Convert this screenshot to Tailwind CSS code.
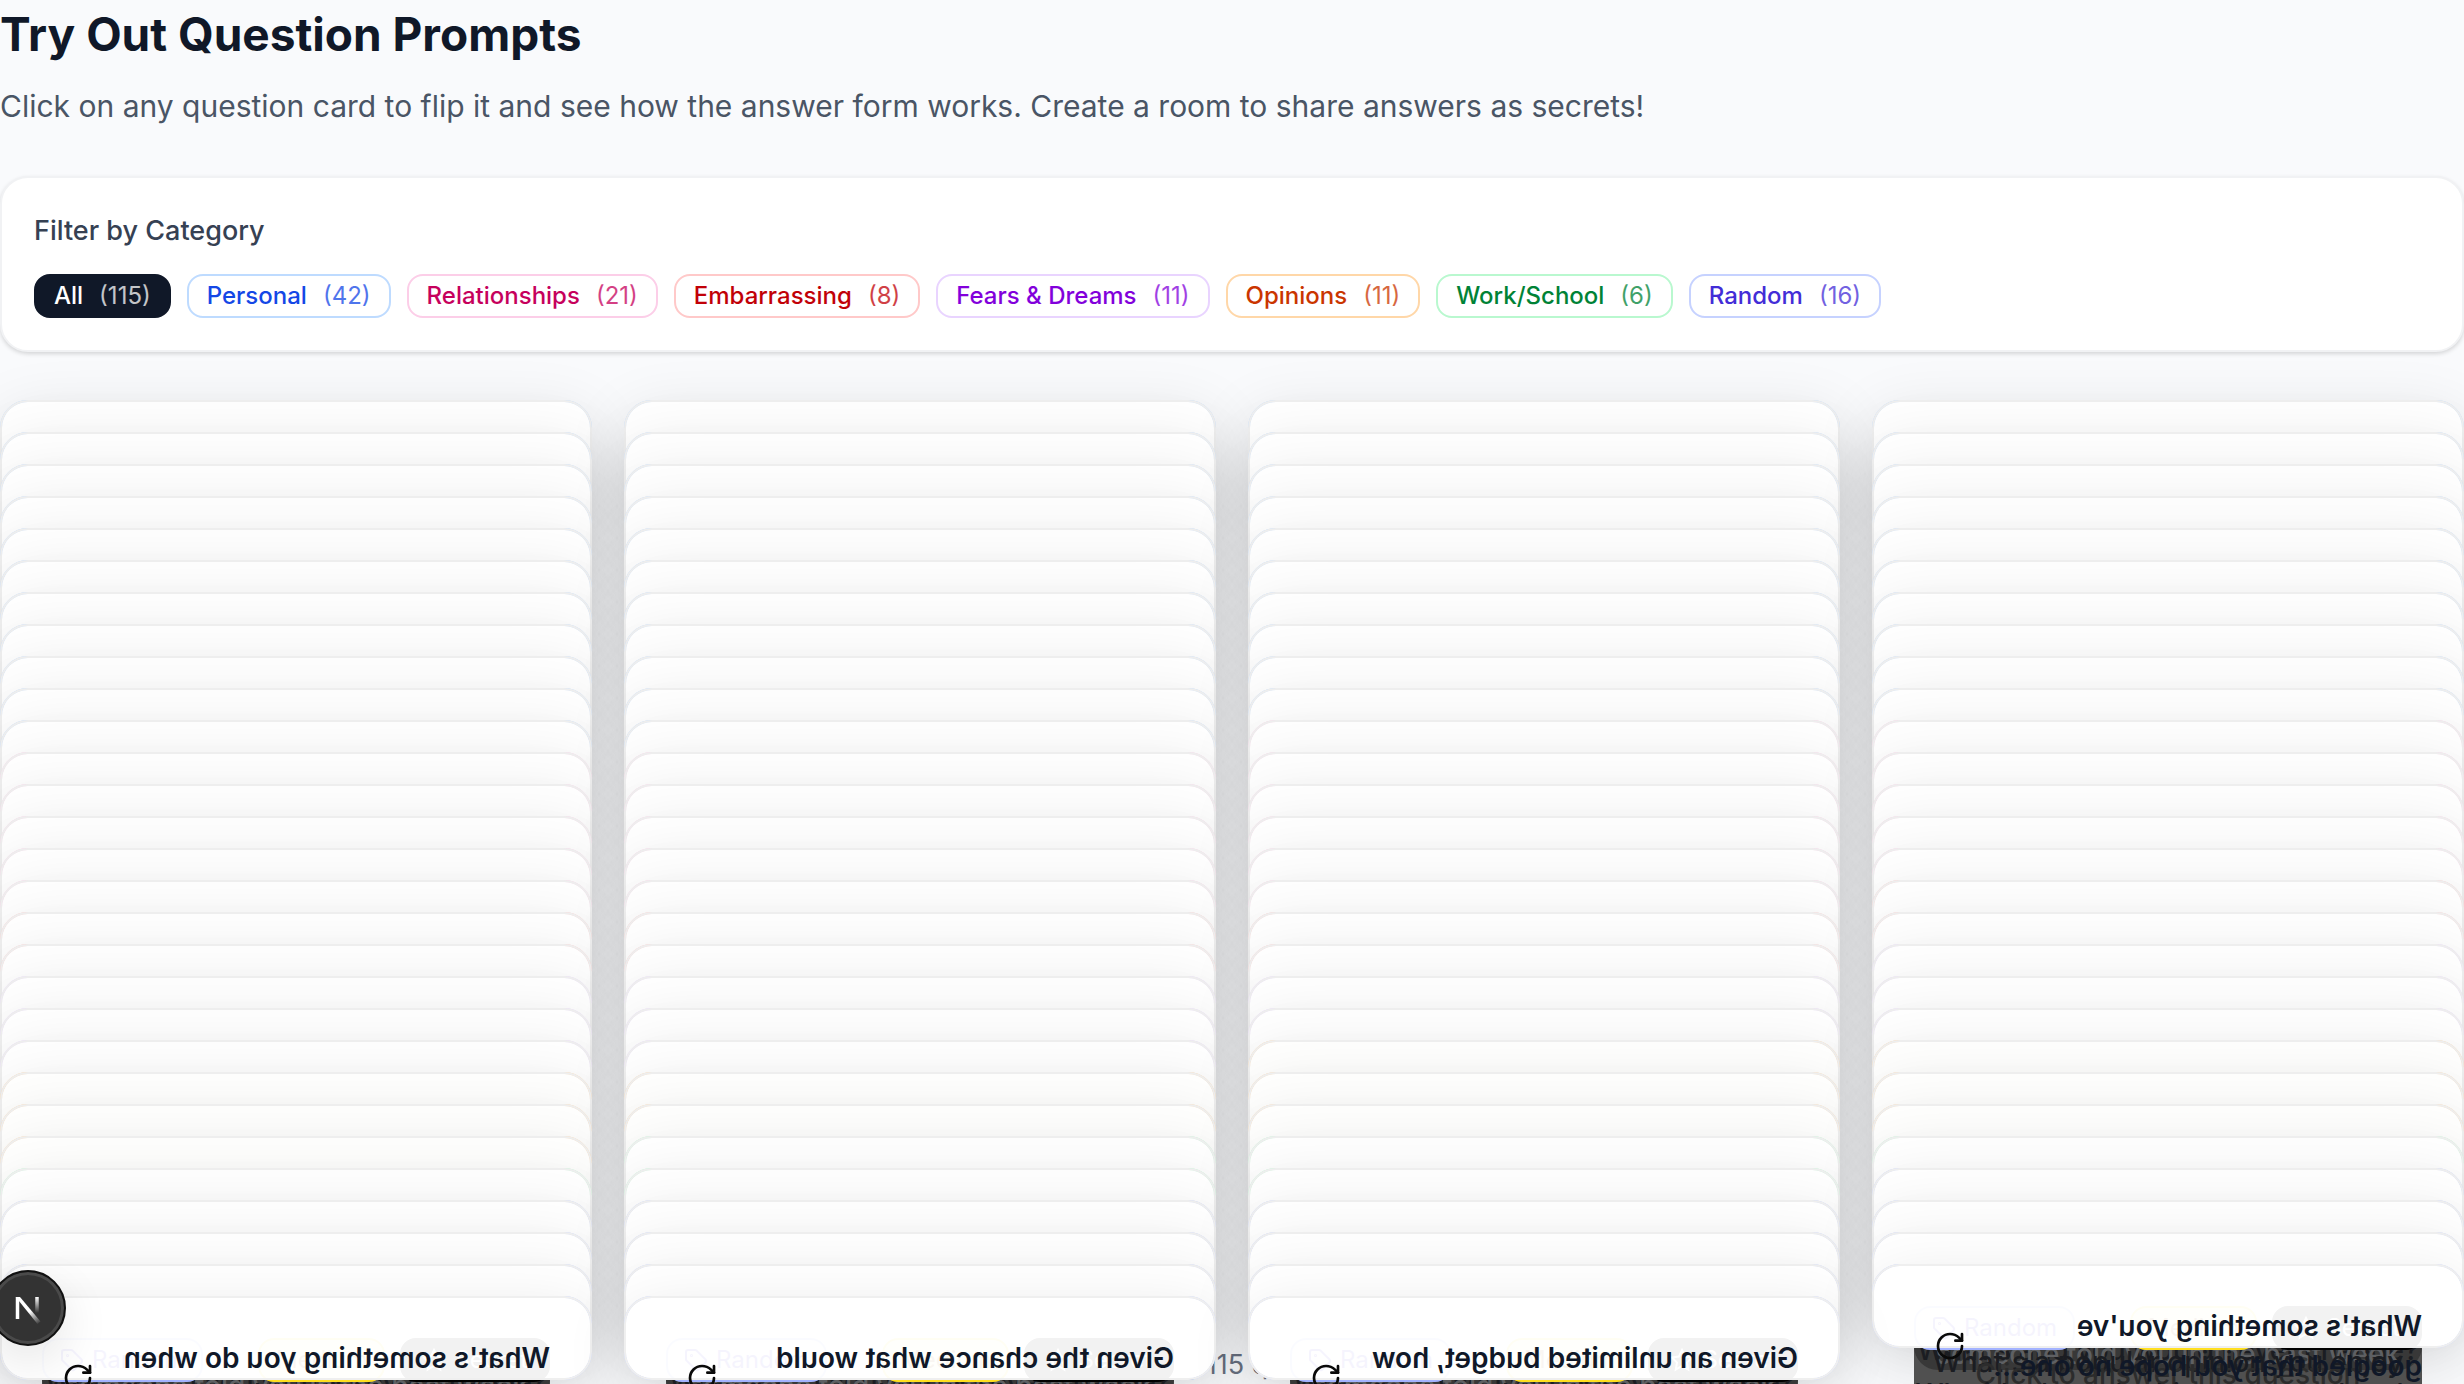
<!DOCTYPE html>
<html lang="en">
<head>
<meta charset="utf-8">
<title>Question Prompts</title>
<script src="https://cdn.jsdelivr.net/npm/@tailwindcss/browser@4"></script>
</head>
<body class="bg-[#f9fafc] font-[Inter,sans-serif] text-gray-900">
<div class="relative h-screen overflow-hidden">
  <main>
    <header class="mb-[46px] flex flex-col gap-4 pt-0.5">
      <h1 class="text-[46px] leading-16 font-bold text-[#101828]">Try Out Question Prompts</h1>
      <p class="text-[30px] leading-12 text-[#4a5565]">Click on any question card to flip it and see how the answer form works. Create a room to share answers as secrets!</p>
    </header>

    <section class="mb-12 flex flex-col gap-[22px] rounded-[28px] border-2 border-[#f1f2f4] bg-white p-8 shadow-[0_2px_4px_rgba(0,0,0,0.15)]">
      <h2 class="text-[27px] leading-[42px] font-medium text-[#364153]">Filter by Category</h2>
      <div id="filters" class="flex flex-wrap gap-4 text-[24px] leading-10 font-medium"></div>
    </section>

    <section id="cards" class="grid auto-rows-[0px] grid-cols-4 gap-8"></section>

    <p class="mt-12 text-center text-[27px] leading-[42px] text-[#6a7282]">Showing 115 questions</p>
  </main>

  <button aria-label="Open Next.js Dev Tools" class="absolute bottom-[38px] -left-[10px] size-19 rounded-full border-2 border-[#111] bg-[#333] shadow-[inset_0_0_0_3px_#4a4a4a,0_16px_48px_rgba(0,0,0,0.1)]">
    <svg class="size-full" viewBox="0 0 72 72" fill="none">
      <defs>
        <linearGradient id="diag" x1="40" y1="38" x2="49" y2="51" gradientUnits="userSpaceOnUse"><stop stop-color="#fff"/><stop offset="1" stop-color="#fff" stop-opacity="0"/></linearGradient>
        <linearGradient id="stem" x1="45" y1="25" x2="45" y2="41" gradientUnits="userSpaceOnUse"><stop stop-color="#fff"/><stop offset="1" stop-color="#fff" stop-opacity="0"/></linearGradient>
      </defs>
      <path d="M25.500 47V25" stroke="#fff" stroke-width="3.500"/>
      <path d="M23.700 25h4.300L48.500 49.500 45.500 52z" fill="url(#diag)"/>
      <path d="M45 25v16" stroke="url(#stem)" stroke-width="3.500"/>
    </svg>
  </button>
</div>

<script>
const categories = [
  { name: 'All', count: 115, pill: 'border-[#101828] bg-[#101828] text-white' },
  { name: 'Personal', count: 42, pill: 'border-blue-200 text-blue-700', face: 'border-blue-200 bg-blue-50' },
  { name: 'Relationships', count: 21, pill: 'border-pink-200 text-pink-700', face: 'border-pink-200 bg-pink-50' },
  { name: 'Embarrassing', count: 8, pill: 'border-red-200 text-red-700', face: 'border-red-200 bg-red-50' },
  { name: 'Fears & Dreams', count: 11, pill: 'border-purple-200 text-purple-700', face: 'border-purple-200 bg-purple-50' },
  { name: 'Opinions', count: 11, pill: 'border-orange-200 text-orange-700', face: 'border-orange-200 bg-orange-50' },
  { name: 'Work/School', count: 6, pill: 'border-green-200 text-green-700', face: 'border-green-200 bg-green-50' },
  { name: 'Random', count: 16, pill: 'border-indigo-200 text-indigo-700', face: 'border-indigo-200 bg-white' },
];

document.getElementById('filters').innerHTML = categories.map(c =>
  `<button class="flex gap-4 rounded-2xl border-2 px-[18px] ${c.pill}"><span>${c.name.replace('&', '&amp;')}</span><span class="font-normal opacity-75">(${c.count})</span></button>`).join('');

const prompts = {
  111: ["What's something you've", 'googled that you hope no one...'],
  112: ["What's something you do when", 'nobody is around to see you?'],
  113: ['Given the chance what would', 'you change about yourself?'],
  114: ['Given an unlimited budget, how', 'would you spend a weekend?'],
};

const tag = '<svg class="size-6" viewBox="0 0 24 24" fill="none" stroke="currentColor" stroke-width="2"><path d="M12.586 2.586A2 2 0 0 0 11.172 2H4a2 2 0 0 0-2 2v7.172a2 2 0 0 0 .586 1.414l8.704 8.704a2.426 2.426 0 0 0 3.420 0l6.580-6.580a2.426 2.426 0 0 0 0-3.420z"/><circle cx="7.500" cy="7.500" r=".5"/></svg>';
const star = '<svg class="size-6" viewBox="0 0 24 24" fill="none" stroke="currentColor" stroke-width="2"><path d="m12 2 3 6.500 7 1-5 5 1.200 7L12 18l-6.200 3.500 1.200-7-5-5 7-1z"/></svg>';
const flip = '<svg class="size-8 -scale-x-100" viewBox="0 0 24 24" fill="none" stroke="currentColor" stroke-width="2" stroke-linecap="round" stroke-linejoin="round"><path d="M21 12a9 9 0 1 1-9-9c2.520 0 4.930 1 6.740 2.740L21 8"/><path d="M21 3v5h-5"/></svg>';

const badges = `
  <div class="flex h-11 items-stretch justify-between text-[24px] leading-10">
    <span class="flex items-center gap-2 rounded-2xl border-2 border-indigo-300 bg-indigo-50 px-4 text-indigo-700">${tag}Random</span>
    <span class="ml-10 rounded-2xl border-2 border-yellow-300 bg-yellow-100 px-4 text-yellow-800">Medium</span>
    <span class="flex items-center gap-2 rounded-2xl border-2 border-black bg-black px-5 text-white">${star}Secret</span>
  </div>`;

const pile = `
  <div class="absolute inset-x-10 top-20 grid h-40 justify-items-center overflow-hidden bg-[#505050] text-[28px] leading-8 font-medium whitespace-nowrap text-[#1b1d22] *:col-start-1 *:row-start-1">
    <span class="h-6 w-full rounded-b-3xl bg-[#383838]"></span>
    <span class="-mt-3">What's and you would never change?</span>
    <span class="-mt-2 text-[#5e6063]">someone told you in the past week</span>
    <span class="mt-0">What's a popular opinion you enjoy</span>
    <span class="mt-3 text-[#2c2c2c]">Click to answer this question</span>
    <span class="mt-8">Why it's the only thing you need to do</span>
  </div>`;

let n = 0, html = '';
for (const c of categories.slice(1)) for (let i = 0; i < c.count; i++, n++) {
  const p = prompts[n];
  html += `<article class="relative">
    <div class="absolute inset-x-0 top-0 h-[84px] rounded-[28px] border-2 p-10 shadow-[0_16px_64px_rgba(0,0,0,0.11)] ${c.face}">${p ? pile + '<div class="relative">' + badges + '</div>' : ''}</div>
    <div class="absolute inset-x-0 top-0 h-[84px] -scale-x-100 rounded-[28px] border-2 border-[#efefef] bg-white/95 bg-clip-padding p-10">${p ? `
      <div class="flex items-start justify-between">
        <h3 class="text-[28px] leading-10 font-semibold whitespace-nowrap text-[#101828]">${p[0]}<br>${p[1]}</h3>
        <button aria-label="Flip card" class="-ml-10 flex h-20 w-18 shrink-0 items-center justify-center text-[#0a0a0a]">${flip}</button>
      </div>` : ''}</div>
  </article>`;
}
document.getElementById('cards').innerHTML = html;
</script>
</body>
</html>
